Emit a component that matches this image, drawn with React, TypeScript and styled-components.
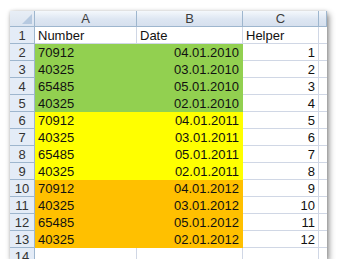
import React from "react";
import styled, { createGlobalStyle } from "styled-components";

const GlobalStyle = createGlobalStyle`
  html, body {
    margin: 0;
    padding: 0;
    background: #ffffff;
  }
  body {
    font-family: "Liberation Sans", Arial, sans-serif;
  }
`;

const Page = styled.div`
  padding: 11px 0 0 10px;
`;

const Sheet = styled.div`
  width: 317px;
  height: 248px;
  overflow: hidden;
  background: #ffffff;
  box-shadow: 2px 3px 6px rgba(0, 0, 0, 0.45), 0 0 3px rgba(0, 0, 0, 0.15);
  display: grid;
  grid-template-columns: 25px 102px 106px 76px 8px;
  grid-auto-rows: 17px;
  grid-template-rows: 16px;
  font-size: 13px;
  color: #111;
`;

const ColHead = styled.div`
  box-sizing: border-box;
  background: linear-gradient(#f4f8fc, #dde6f2 55%, #d6e0ee);
  border-right: 1px solid #9eb6ce;
  border-bottom: 1px solid #9eb6ce;
  display: flex;
  align-items: center;
  justify-content: center;
  color: #3d3d3d;
  font-size: 13px;
`;

const Corner = styled(ColHead)`
  position: relative;
  background: linear-gradient(#e8eef6, #dbe4f0);
`;

const CornerMark = styled.div`
  position: absolute;
  right: 2px;
  bottom: 2px;
  width: 0;
  height: 0;
  border-left: 10px solid transparent;
  border-bottom: 10px solid #b6c9e0;
`;

const RowHead = styled.div`
  box-sizing: border-box;
  background: #e4ecf7;
  border-right: 1px solid #9eb6ce;
  border-bottom: 1px solid #9eb6ce;
  display: flex;
  align-items: center;
  justify-content: center;
  color: #333;
  font-size: 13px;
`;

const Cell = styled.div<{ $fill?: string; $right?: boolean }>`
  box-sizing: border-box;
  background: ${(p) => p.$fill ?? "#ffffff"};
  border-right: 1px solid ${(p) => p.$fill ?? "#d0d7e5"};
  border-bottom: 1px solid ${(p) => p.$fill ?? "#d0d7e5"};
  display: flex;
  align-items: center;
  justify-content: ${(p) => (p.$right ? "flex-end" : "flex-start")};
  padding: 0 3px;
  white-space: nowrap;
  overflow: hidden;
`;

const Edge = styled.div`
  box-sizing: border-box;
  border-bottom: 1px solid #d0d7e5;
`;

const GREEN = "#92d050";
const YELLOW = "#ffff00";
const ORANGE = "#ffc000";

const rows: { num: string; date: string; helper: number; fill: string }[] = [
  { num: "70912", date: "04.01.2010", helper: 1, fill: GREEN },
  { num: "40325", date: "03.01.2010", helper: 2, fill: GREEN },
  { num: "65485", date: "05.01.2010", helper: 3, fill: GREEN },
  { num: "40325", date: "02.01.2010", helper: 4, fill: GREEN },
  { num: "70912", date: "04.01.2011", helper: 5, fill: YELLOW },
  { num: "40325", date: "03.01.2011", helper: 6, fill: YELLOW },
  { num: "65485", date: "05.01.2011", helper: 7, fill: YELLOW },
  { num: "40325", date: "02.01.2011", helper: 8, fill: YELLOW },
  { num: "70912", date: "04.01.2012", helper: 9, fill: ORANGE },
  { num: "40325", date: "03.01.2012", helper: 10, fill: ORANGE },
  { num: "65485", date: "05.01.2012", helper: 11, fill: ORANGE },
  { num: "40325", date: "02.01.2012", helper: 12, fill: ORANGE },
];

export default function App() {
  return (
    <>
      <GlobalStyle />
      <Page>
        <Sheet>
          <Corner>
            <CornerMark />
          </Corner>
          <ColHead>A</ColHead>
          <ColHead>B</ColHead>
          <ColHead>C</ColHead>
          <ColHead />

          <RowHead>1</RowHead>
          <Cell>Number</Cell>
          <Cell>Date</Cell>
          <Cell>Helper</Cell>
          <Edge />

          {rows.map((r, i) => (
            <React.Fragment key={i}>
              <RowHead>{i + 2}</RowHead>
              <Cell $fill={r.fill}>{r.num}</Cell>
              <Cell $fill={r.fill} $right>
                {r.date}
              </Cell>
              <Cell $right>{r.helper}</Cell>
              <Edge />
            </React.Fragment>
          ))}

          <RowHead>14</RowHead>
          <Cell />
          <Cell />
          <Cell />
          <Edge />
        </Sheet>
      </Page>
    </>
  );
}
